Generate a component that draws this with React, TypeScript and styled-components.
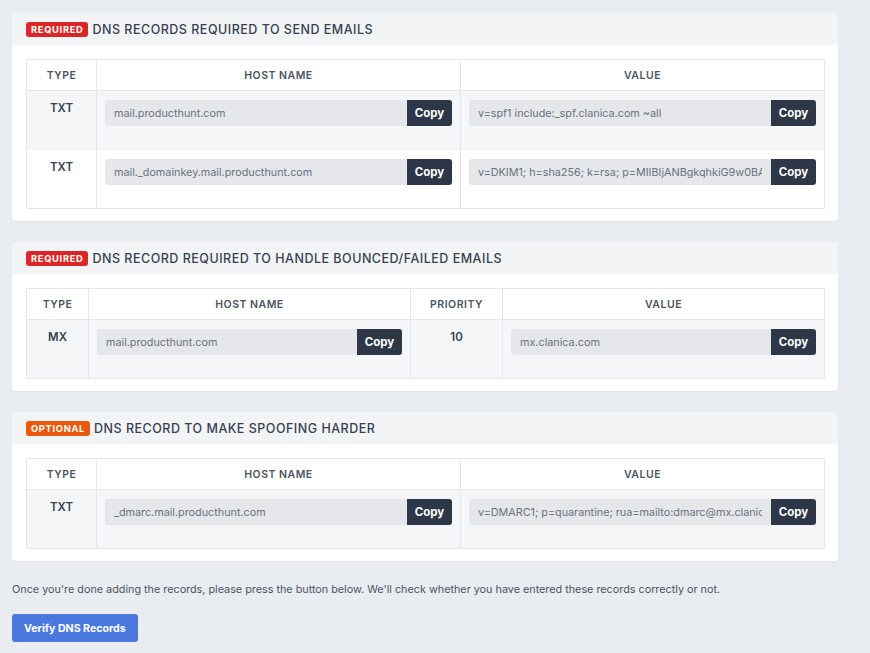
import React from "react";
import styled, { createGlobalStyle } from "styled-components";

interface DnsRow {
  type: string;
  host: string;
  value: string;
  priority?: string;
}

interface Section {
  badge: "REQUIRED" | "OPTIONAL";
  title: string;
  withPriority?: boolean;
  typeWidth: number;
  rows: DnsRow[];
}

const sections: Section[] = [
  {
    badge: "REQUIRED",
    title: "DNS Records required to send emails",
    typeWidth: 70,
    rows: [
      {
        type: "TXT",
        host: "mail.producthunt.com",
        value: "v=spf1 include:_spf.clanica.com ~all",
      },
      {
        type: "TXT",
        host: "mail._domainkey.mail.producthunt.com",
        value:
          "v=DKIM1; h=sha256; k=rsa; p=MIIBIjANBgkqhkiG9w0BAQEFAAOCAQ8AMIIBCgKCAQEA",
      },
    ],
  },
  {
    badge: "REQUIRED",
    title: "DNS Record required to handle bounced/failed emails",
    withPriority: true,
    typeWidth: 62,
    rows: [
      {
        type: "MX",
        host: "mail.producthunt.com",
        priority: "10",
        value: "mx.clanica.com",
      },
    ],
  },
  {
    badge: "OPTIONAL",
    title: "DNS Record to make spoofing harder",
    typeWidth: 70,
    rows: [
      {
        type: "TXT",
        host: "_dmarc.mail.producthunt.com",
        value: "v=DMARC1; p=quarantine; rua=mailto:dmarc@mx.clanica.com",
      },
    ],
  },
];

const CopyField: React.FC<{ value: string }> = ({ value }) => (
  <Field>
    <FieldInput readOnly value={value} />
    <CopyButton type="button">Copy</CopyButton>
  </Field>
);

const App: React.FC = () => {
  return (
    <>
      <GlobalStyle />
      <Page>
        {sections.map((s) => (
          <Card key={s.title}>
            <CardHeader>
              <Badge optional={s.badge === "OPTIONAL"}>{s.badge}</Badge>
              <Title>{s.title}</Title>
            </CardHeader>
            <CardBody>
              <Table>
                <colgroup>
                  <col style={{ width: s.typeWidth }} />
                  <col />
                  {s.withPriority && <col style={{ width: 92 }} />}
                  <col />
                </colgroup>
                <thead>
                  <tr>
                    <Th>Type</Th>
                    <Th>Host Name</Th>
                    {s.withPriority && <Th>Priority</Th>}
                    <Th>Value</Th>
                  </tr>
                </thead>
                <tbody>
                  {s.rows.map((r, i) => (
                    <Tr key={i} striped={i % 2 === 0}>
                      <TextCell>{r.type}</TextCell>
                      <FieldCell>
                        <CopyField value={r.host} />
                      </FieldCell>
                      {s.withPriority && <TextCell>{r.priority}</TextCell>}
                      <FieldCell>
                        <CopyField value={r.value} />
                      </FieldCell>
                    </Tr>
                  ))}
                </tbody>
              </Table>
            </CardBody>
          </Card>
        ))}
        <Note>
          Once you're done adding the records, please press the button below.
          We'll check whether you have entered these records correctly or not.
        </Note>
        <VerifyButton type="button">Verify DNS Records</VerifyButton>
      </Page>
    </>
  );
};

const GlobalStyle = createGlobalStyle`
  body {
    margin: 0;
    background: #e9ecf1;
    font-family: Inter, "Noto Sans", sans-serif;
    color: #374151;
  }
`;

const Page = styled.div`
  display: flex;
  flex-direction: column;
  align-items: flex-start;
  gap: 21px;
  padding: 13px 32px 12px 12px;
`;

const Card = styled.section`
  width: 100%;
  background: #ffffff;
  border-radius: 4px;
  box-shadow: 0 1px 2px rgba(0, 0, 0, 0.04);
  overflow: hidden;
`;

const CardHeader = styled.div`
  display: flex;
  align-items: center;
  gap: 4px;
  height: 32px;
  padding: 0 14px;
  background: #f3f4f6;
`;

const Badge = styled.span<{ optional?: boolean }>`
  display: inline-flex;
  align-items: center;
  height: 15px;
  padding: 0 5px;
  border-radius: 3px;
  background: ${(p) => (p.optional ? "#ea580c" : "#dc2626")};
  color: #ffffff;
  font-size: 9.3px;
  font-weight: 700;
  letter-spacing: 0.7px;
`;

const Title = styled.h2`
  margin: 0;
  font-size: 12.5px;
  font-weight: 500;
  letter-spacing: 0.5px;
  text-transform: uppercase;
  color: #374151;
`;

const CardBody = styled.div`
  padding: 14px 13px 12px 14px;
`;

const Table = styled.table`
  width: 100%;
  table-layout: fixed;
  border-collapse: collapse;
  border: 1px solid #e5e7eb;
`;

const Th = styled.th`
  height: 30px;
  padding: 0 8px;
  border: 1px solid #e5e7eb;
  font-size: 10.5px;
  font-weight: 600;
  letter-spacing: 0.5px;
  text-transform: uppercase;
  color: #4b5563;
  background: #ffffff;
`;

const Tr = styled.tr<{ striped?: boolean }>`
  background: ${(p) => (p.striped ? "#f5f6f8" : "#ffffff")};
`;

const TextCell = styled.td`
  padding: 10px 8px 0;
  height: 59px;
  box-sizing: border-box;
  vertical-align: top;
  text-align: center;
  border-left: 1px solid #e5e7eb;
  border-right: 1px solid #e5e7eb;
  border-top: 1px solid #eceef1;
  font-size: 11.5px;
  font-weight: 600;
  color: #374151;
`;

const FieldCell = styled.td`
  padding: 9px 8px 0;
  height: 59px;
  box-sizing: border-box;
  vertical-align: top;
  border-left: 1px solid #e5e7eb;
  border-right: 1px solid #e5e7eb;
  border-top: 1px solid #eceef1;
`;

const Field = styled.div`
  display: flex;
  height: 26px;
`;

const FieldInput = styled.input`
  flex: 1;
  min-width: 0;
  height: 100%;
  box-sizing: border-box;
  padding: 0 9px;
  border: none;
  outline: none;
  border-radius: 3px 0 0 3px;
  background: #e5e7eb;
  font-family: Inter, "Noto Sans", sans-serif;
  font-size: 10.8px;
  color: #6b7280;
`;

const CopyButton = styled.button`
  flex: none;
  width: 45px;
  height: 100%;
  border: none;
  border-radius: 0 3px 3px 0;
  background: #2d3748;
  color: #ffffff;
  font-family: Inter, "Noto Sans", sans-serif;
  font-size: 11.5px;
  font-weight: 700;
  cursor: pointer;
`;

const Note = styled.p`
  margin: 1px 0 -3px;
  font-size: 10.8px;
  color: #4b5563;
`;

const VerifyButton = styled.button`
  height: 28px;
  padding: 0 12px;
  border: none;
  border-radius: 3px;
  background: #4a78df;
  color: #ffffff;
  font-family: Inter, "Noto Sans", sans-serif;
  font-size: 10.6px;
  font-weight: 700;
  cursor: pointer;
`;

export default App;
